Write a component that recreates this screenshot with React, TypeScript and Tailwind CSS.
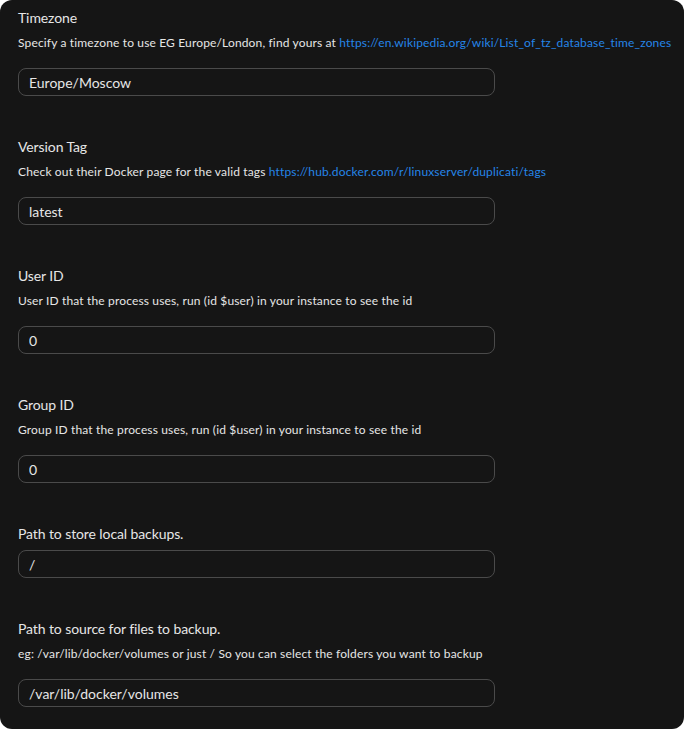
import React from 'react';

interface Field {
  label: string;
  value: string;
  desc?: string;
  link?: string;
}

const fields: Field[] = [
  {
    label: 'Timezone',
    desc: 'Specify a timezone to use EG Europe/London, find yours at',
    link: 'https://en.wikipedia.org/wiki/List_of_tz_database_time_zones',
    value: 'Europe/Moscow',
  },
  {
    label: 'Version Tag',
    desc: 'Check out their Docker page for the valid tags',
    link: 'https://hub.docker.com/r/linuxserver/duplicati/tags',
    value: 'latest',
  },
  {
    label: 'User ID',
    desc: 'User ID that the process uses, run (id $user) in your instance to see the id',
    value: '0',
  },
  {
    label: 'Group ID',
    desc: 'Group ID that the process uses, run (id $user) in your instance to see the id',
    value: '0',
  },
  { label: 'Path to store local backups.', value: '/' },
  {
    label: 'Path to source for files to backup.',
    desc: 'eg: /var/lib/docker/volumes or just / So you can select the folders you want to backup',
    value: '/var/lib/docker/volumes',
  },
];

export default function App() {
  return (
    <div className="h-[729px] w-[684px] overflow-hidden bg-white font-['Lato',sans-serif]">
      <div className="flex h-full flex-col gap-[41px] rounded-[12px] bg-[#151515] px-[18px] pt-[8px]">
        {fields.map((f) => (
          <div key={f.label} className="flex flex-col">
            <label className="text-[14px] leading-[20px] tracking-[-0.1px] text-[#e6e6e6]">{f.label}</label>
            {f.desc && (
              <p className="mt-[5px] whitespace-nowrap text-[12px] leading-[20px] tracking-[0.15px] text-[#e6e6e6]">
                {f.desc}
                {f.link && (
                  <>
                    {' '}
                    <a href={f.link} className="text-[#2585e8]">
                      {f.link}
                    </a>
                  </>
                )}
              </p>
            )}
            <input
              readOnly
              value={f.value}
              className={`${f.desc ? 'mt-[15px]' : 'mt-[6px]'} h-[28px] w-[477px] rounded-[8px] border border-[#4a4a4a] bg-transparent px-[10px] text-[14px] text-[#e6e6e6] outline-none`}
            />
          </div>
        ))}
      </div>
    </div>
  );
}
